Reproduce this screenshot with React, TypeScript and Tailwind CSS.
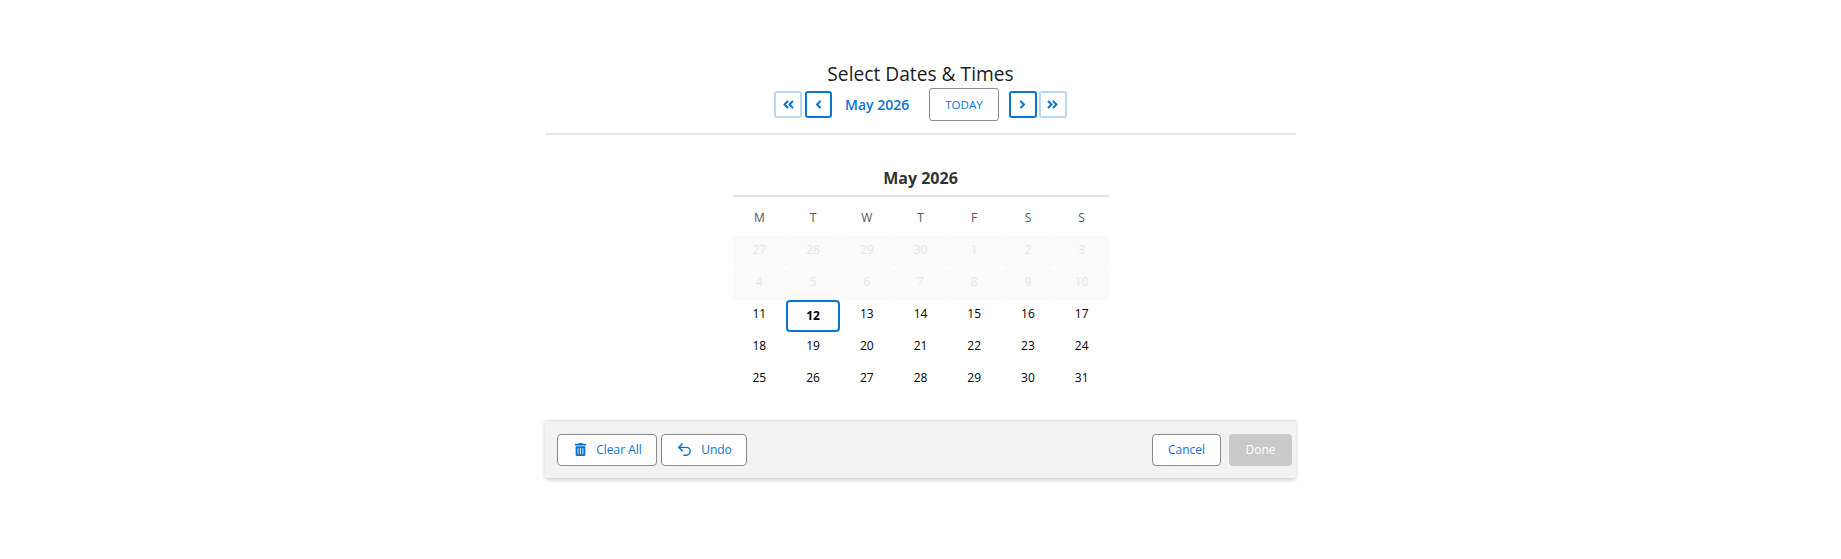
import React from 'react';
import { FaAngleDoubleLeft, FaAngleDoubleRight, FaAngleLeft, FaAngleRight, FaTrashAlt } from 'react-icons/fa';
import { Undo2 } from 'lucide-react';

const WEEKDAYS = ['M', 'T', 'W', 'T', 'F', 'S', 'S'];
const DISABLED = [27, 28, 29, 30, 1, 2, 3, 4, 5, 6, 7, 8, 9, 10];
const ACTIVE = Array.from({ length: 21 }, (_, i) => i + 11);

const NavButton: React.FC<{ strong?: boolean; children: React.ReactNode }> = ({ strong, children }) => (
  <button
    className={
      strong
        ? 'flex h-[27.5px] w-[27.5px] items-center justify-center rounded-[3px] border-2 border-[#0a74d4] text-[#0a74d4]'
        : 'flex h-[27.5px] w-[27.5px] items-center justify-center rounded-[3px] border-2 border-[#b4d8f6] text-[#0a74d4]'
    }
  >
    {children}
  </button>
);

export default function App() {
  return (
    <div className="h-[559px] w-full bg-white font-['Open_Sans',sans-serif]">
      <div className="mx-auto w-[751px] pt-[59px]">
        <h1 className="h-[29px] text-center text-[19.2px] leading-[29px] text-[#1c1c1c]">Select Dates &amp; Times</h1>

        <div className="flex h-[33px] items-center justify-center">
          <NavButton>
            <FaAngleDoubleLeft size={13} />
          </NavButton>
          <div className="ml-[2.6px]">
            <NavButton strong>
              <FaAngleLeft size={13} />
            </NavButton>
          </div>
          <span className="w-[97px] pl-[13px] text-[14px] font-semibold text-[#0a74d4]">May 2026</span>
          <button className="h-[33px] w-[70px] rounded-[3px] border border-[#8a8a8a] text-[11.6px] text-[#0a74d4]">
            TODAY
          </button>
          <div className="ml-[10px] mr-[2.6px]">
            <NavButton strong>
              <FaAngleRight size={13} />
            </NavButton>
          </div>
          <NavButton>
            <FaAngleDoubleRight size={13} />
          </NavButton>
        </div>

        <div className="mt-[12px] h-[2px] bg-[#e6e6e6]" />

        <div className="mx-auto mt-[26px] w-[376px]">
          <div className="h-[34px] text-center text-[16px] font-bold leading-[34px] text-[#333333]">May 2026</div>
          <div className="h-[2px] bg-[#e4e4e4]" />

          <div className="grid h-[39px] grid-cols-7 items-center pt-[3px] text-center text-[12px] text-[#555555]">
            {WEEKDAYS.map((day, i) => (
              <span key={i}>{day}</span>
            ))}
          </div>

          <div className="grid grid-cols-7">
            {DISABLED.map((day, i) => (
              <div
                key={i}
                className="flex h-[32px] items-center justify-center rounded-[3px] bg-[#fafafa] pb-[4px] text-[12px] text-[#e6e6e6]"
              >
                {day}
              </div>
            ))}
            {ACTIVE.map((day) =>
              day === 12 ? (
                <div
                  key={day}
                  className="flex h-[32px] items-center justify-center rounded-[4px] border-2 border-[#0a74d4] text-[12px] font-bold text-black"
                >
                  {day}
                </div>
              ) : (
                <div key={day} className="flex h-[32px] items-center justify-center pb-[4px] text-[12px] font-medium text-black">
                  {day}
                </div>
              ),
            )}
          </div>
        </div>

        <div className="mt-[24px] flex h-[58px] items-center justify-between rounded-b-[3px] border-t border-[#e6e6e6] bg-[#f2f2f2] pl-[12px] pr-[4px] shadow-[0_2px_4px_rgba(0,0,0,0.2)]">
          <div className="flex gap-[4px]">
            <button className="flex h-[32px] w-[100px] items-center justify-center gap-[9px] rounded-[4px] border border-[#8a8a8a] bg-white pl-[2px] text-[12px] text-[#0a74d4]">
              <FaTrashAlt size={13} />
              Clear All
            </button>
            <button className="flex h-[32px] w-[86px] items-center justify-center gap-[8px] rounded-[4px] border border-[#8a8a8a] bg-white text-[12px] text-[#0a74d4]">
              <Undo2 size={17} />
              Undo
            </button>
          </div>
          <div className="flex gap-[8px]">
            <button className="h-[32px] w-[69px] rounded-[4px] border border-[#8a8a8a] bg-white text-[12px] text-[#0a74d4]">
              Cancel
            </button>
            <button className="h-[32px] w-[63px] rounded-[4px] bg-[#c9c9c9] text-[12px] font-medium text-white">Done</button>
          </div>
        </div>
      </div>
    </div>
  );
}
